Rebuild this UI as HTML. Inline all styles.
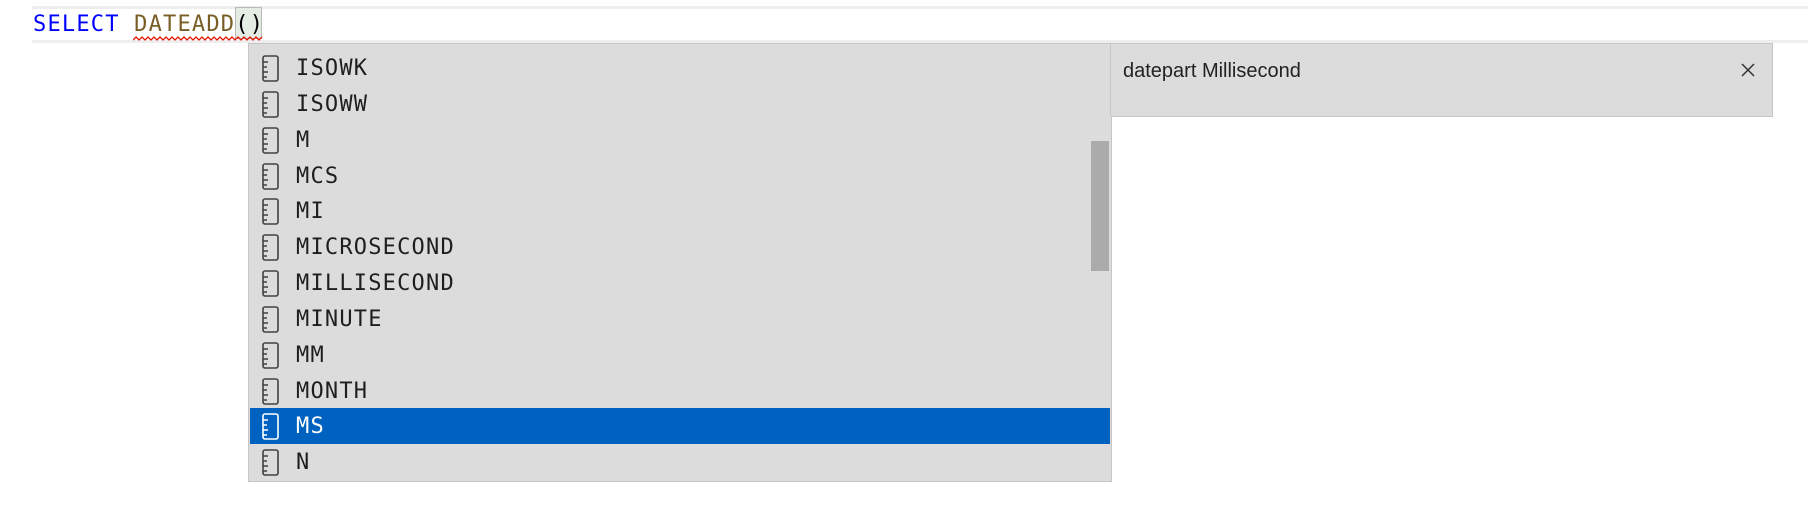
<!DOCTYPE html>
<html><head><meta charset="utf-8"><style>
body{margin:0;width:1808px;height:520px;background:#fff;position:relative;overflow:hidden;font-family:"DejaVu Sans Mono","Liberation Mono",monospace;}
.line{position:absolute;left:32px;top:6px;width:1776px;height:31px;border-top:3px solid #eeeeee;border-bottom:3px solid #eeeeee;}
.code{position:absolute;left:33px;top:9px;font-size:22px;letter-spacing:1.2px;line-height:32px;white-space:pre;}
.kw{color:#0000ff}.fn{color:#795e26}
.br{position:absolute;left:235px;top:7px;width:27px;height:32px;background:#e4ece4;border:1px solid #b9b9b9;box-sizing:border-box;}
.list{position:absolute;left:248px;top:43px;width:864px;height:439px;background:#dcdcdc;border:1px solid #c6c6c6;box-sizing:border-box;}
.row{position:absolute;left:1px;width:860px;height:36px;}
.row span{position:absolute;left:46px;top:3px;font-size:22px;letter-spacing:1.2px;line-height:32px;color:#1e1e1e;}
.row svg{position:absolute;left:12px;top:5px;}
.sel{background:#0062c0}.sel span{color:#fff}
.sb{position:absolute;left:1091px;top:141px;width:18px;height:130px;background:#ababab;}
.det{position:absolute;left:1110px;top:43px;width:663px;height:74px;background:#dcdcdc;border:1px solid #c6c6c6;box-sizing:border-box;font-family:"Liberation Sans",sans-serif;font-size:20px;color:#222;}
.det .t{position:absolute;left:12px;top:16px;}
.det .x{position:absolute;left:629px;top:18px;}
</style></head><body>
<div class="line"></div>
<div class="br"></div>
<div class="code"><span class="kw">SELECT</span> <span class="fn">DATEADD</span>()</div>
<svg style="position:absolute;left:133px;top:36px" width="130" height="6"><path d="M0 4 L3 1 L6 4 L9 1 L12 4 L15 1 L18 4 L21 1 L24 4 L27 1 L30 4 L33 1 L36 4 L39 1 L42 4 L45 1 L48 4 L51 1 L54 4 L57 1 L60 4 L63 1 L66 4 L69 1 L72 4 L75 1 L78 4 L81 1 L84 4 L87 1 L90 4 L93 1 L96 4 L99 1 L102 4 L105 1 L108 4 L111 1 L114 4 L117 1 L120 4 L123 1 L126 4 L129 1" fill="none" stroke="#e51400" stroke-width="1.3"/></svg>
<div class="list">
<div class="row" style="top:6px"><svg width="18" height="28"><rect x="1" y="1" width="15" height="25" rx="2" fill="none" stroke="#424242" stroke-width="1.6"/><path d="M1 7h5M1 12h4M1 17h5M1 22h4" stroke="#424242" stroke-width="1.6"/></svg><span>ISOWK</span></div>
<div class="row" style="top:42px"><svg width="18" height="28"><rect x="1" y="1" width="15" height="25" rx="2" fill="none" stroke="#424242" stroke-width="1.6"/><path d="M1 7h5M1 12h4M1 17h5M1 22h4" stroke="#424242" stroke-width="1.6"/></svg><span>ISOWW</span></div>
<div class="row" style="top:78px"><svg width="18" height="28"><rect x="1" y="1" width="15" height="25" rx="2" fill="none" stroke="#424242" stroke-width="1.6"/><path d="M1 7h5M1 12h4M1 17h5M1 22h4" stroke="#424242" stroke-width="1.6"/></svg><span>M</span></div>
<div class="row" style="top:114px"><svg width="18" height="28"><rect x="1" y="1" width="15" height="25" rx="2" fill="none" stroke="#424242" stroke-width="1.6"/><path d="M1 7h5M1 12h4M1 17h5M1 22h4" stroke="#424242" stroke-width="1.6"/></svg><span>MCS</span></div>
<div class="row" style="top:149px"><svg width="18" height="28"><rect x="1" y="1" width="15" height="25" rx="2" fill="none" stroke="#424242" stroke-width="1.6"/><path d="M1 7h5M1 12h4M1 17h5M1 22h4" stroke="#424242" stroke-width="1.6"/></svg><span>MI</span></div>
<div class="row" style="top:185px"><svg width="18" height="28"><rect x="1" y="1" width="15" height="25" rx="2" fill="none" stroke="#424242" stroke-width="1.6"/><path d="M1 7h5M1 12h4M1 17h5M1 22h4" stroke="#424242" stroke-width="1.6"/></svg><span>MICROSECOND</span></div>
<div class="row" style="top:221px"><svg width="18" height="28"><rect x="1" y="1" width="15" height="25" rx="2" fill="none" stroke="#424242" stroke-width="1.6"/><path d="M1 7h5M1 12h4M1 17h5M1 22h4" stroke="#424242" stroke-width="1.6"/></svg><span>MILLISECOND</span></div>
<div class="row" style="top:257px"><svg width="18" height="28"><rect x="1" y="1" width="15" height="25" rx="2" fill="none" stroke="#424242" stroke-width="1.6"/><path d="M1 7h5M1 12h4M1 17h5M1 22h4" stroke="#424242" stroke-width="1.6"/></svg><span>MINUTE</span></div>
<div class="row" style="top:293px"><svg width="18" height="28"><rect x="1" y="1" width="15" height="25" rx="2" fill="none" stroke="#424242" stroke-width="1.6"/><path d="M1 7h5M1 12h4M1 17h5M1 22h4" stroke="#424242" stroke-width="1.6"/></svg><span>MM</span></div>
<div class="row" style="top:329px"><svg width="18" height="28"><rect x="1" y="1" width="15" height="25" rx="2" fill="none" stroke="#424242" stroke-width="1.6"/><path d="M1 7h5M1 12h4M1 17h5M1 22h4" stroke="#424242" stroke-width="1.6"/></svg><span>MONTH</span></div>
<div class="row sel" style="top:364px"><svg width="18" height="28"><rect x="1" y="1" width="15" height="25" rx="2" fill="none" stroke="#fff" stroke-width="1.6"/><path d="M1 7h5M1 12h4M1 17h5M1 22h4" stroke="#fff" stroke-width="1.6"/></svg><span>MS</span></div>
<div class="row" style="top:400px"><svg width="18" height="28"><rect x="1" y="1" width="15" height="25" rx="2" fill="none" stroke="#424242" stroke-width="1.6"/><path d="M1 7h5M1 12h4M1 17h5M1 22h4" stroke="#424242" stroke-width="1.6"/></svg><span>N</span></div>
</div>
<div class="sb"></div>
<div class="det"><div class="t">datepart Millisecond</div><svg class="x" width="16" height="16"><path d="M2 2L14 14M14 2L2 14" stroke="#333" stroke-width="1.5"/></svg></div>
</body></html>
